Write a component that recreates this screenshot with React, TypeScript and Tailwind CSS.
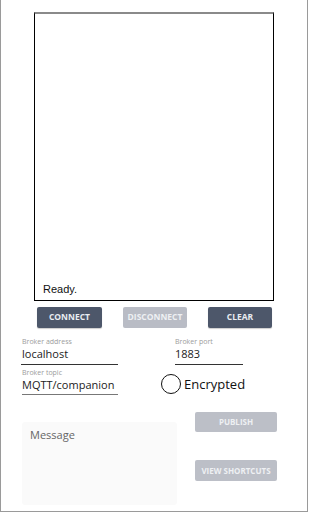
import React from "react";

export default function App() {
  const font = { fontFamily: '"Open Sans", "Noto Sans", sans-serif' };
  return (
    <div
      className="w-[308px] h-[512px] border-x border-b border-[#9a9a9a] bg-white flex flex-col"
      style={font}
    >
      <div className="ml-[33px] mt-[12px] w-[240px] h-[289px] border border-black border-t-[#8a8a8a] border-t-2 flex flex-col justify-end px-[8px] pb-[4px]">
        <span className="text-[11px] leading-[14px] text-[#111]" style={{ fontFamily: '"Liberation Sans", Arial, sans-serif' }}>
          Ready.
        </span>
      </div>

      <div className="flex ml-[36px] mt-[6px] gap-[21px]">
        <button className="w-[65px] h-[21px] rounded-[2px] bg-[#4d576a] text-[#e9ecf1] text-[8.5px] font-bold leading-none shadow-[0_1px_1px_rgba(0,0,0,0.2)]">
          CONNECT
        </button>
        <button className="w-[64px] h-[21px] rounded-[2px] bg-[#b9bcc5] text-[#eef0f3] text-[8.5px] font-bold leading-none">
          DISCONNECT
        </button>
        <button className="w-[64px] h-[21px] rounded-[2px] bg-[#4d576a] text-[#e9ecf1] text-[8.5px] font-bold leading-none shadow-[0_1px_1px_rgba(0,0,0,0.2)]">
          CLEAR
        </button>
      </div>

      <div className="flex mt-[9px] ml-[20px]">
        <div className="w-[97px] flex flex-col">
          <span className="text-[7px] leading-[9px] text-[#9c9c9c] pl-[1px]">Broker address</span>
          <span className="text-[11px] leading-[15px] text-[#222] pl-[1px] border-b border-[#333] pb-[3px]">localhost</span>
        </div>
        <div className="w-[68px] ml-[57px] flex flex-col">
          <span className="text-[7px] leading-[9px] text-[#9c9c9c]">Broker port</span>
          <span className="text-[11px] leading-[15px] text-[#222] border-b border-[#333] pb-[3px]">1883</span>
        </div>
      </div>

      <div className="flex mt-[3px] ml-[21px] items-end">
        <div className="w-[96px] flex flex-col">
          <span className="text-[7px] leading-[9px] text-[#9c9c9c]">Broker topic</span>
          <span className="text-[11px] leading-[15px] text-[#222] border-b border-[#777] pb-[2px]">MQTT/companion</span>
        </div>
        <div className="flex items-center ml-[43px] mb-[1px]">
          <span className="w-[20px] h-[20px] rounded-full border-[1.5px] border-[#111] bg-white"></span>
          <span className="ml-[3px] text-[13px] leading-[18px] text-[#111]">Encrypted</span>
        </div>
      </div>

      <div className="flex ml-[21px] mt-[17px]">
        <div className="w-[155px] h-[83px] mt-[10px] rounded-[3px] bg-[#fafafa] px-[8px] pt-[6px]">
          <span className="block text-[11px] leading-[14px] text-[#666]">Message</span>
        </div>
        <div className="flex flex-col ml-[18px] gap-[28px]">
          <button className="w-[82px] h-[20px] rounded-[2px] bg-[#bcbfc7] text-[#eef0f3] text-[8px] font-bold leading-none">
            PUBLISH
          </button>
          <button className="w-[82px] h-[21px] rounded-[2px] bg-[#bcbfc7] text-[#eef0f3] text-[8px] font-bold leading-none">
            VIEW SHORTCUTS
          </button>
        </div>
      </div>
    </div>
  );
}
